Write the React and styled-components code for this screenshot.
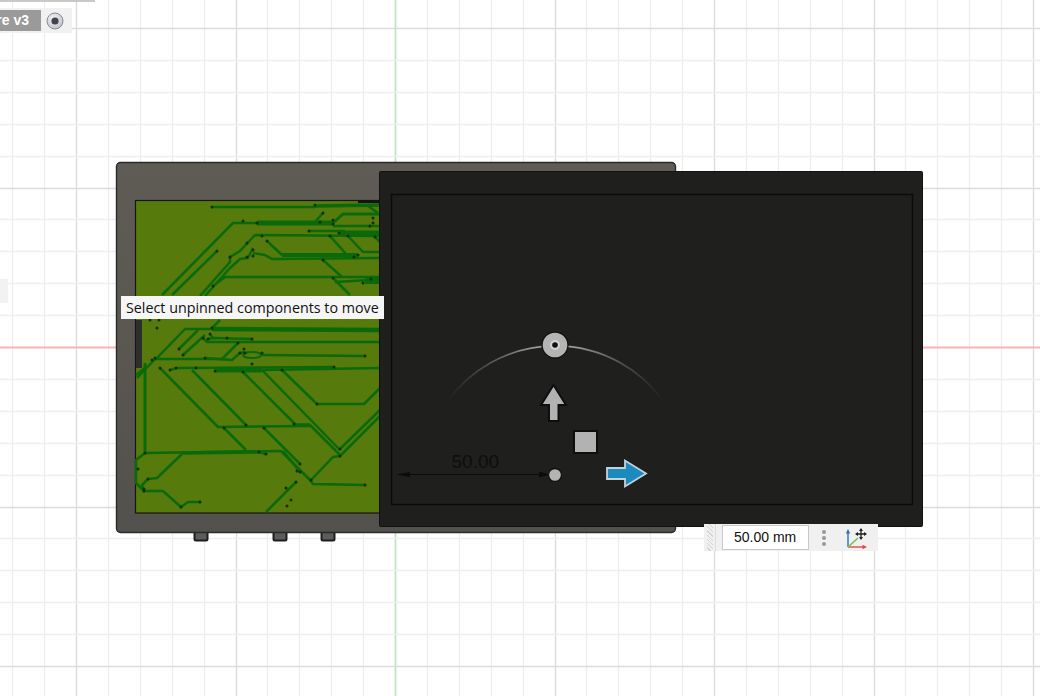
import React from 'react'
import styled, { createGlobalStyle } from 'styled-components'

const GlobalStyle = createGlobalStyle`
  html, body { margin: 0; padding: 0; background: #fff; }
  body { font-family: "Liberation Sans", Arial, sans-serif; }
`

// screen coordinates of the copper traces, [width, x,y, x,y, ...]
const traces = [
  [2.5, 212,207, 315,207],
  [3.5, 315,206, 380,205],
  [2.5, 368,206, 378,213],
  [2.5, 323,213, 315,222],
  [2.5, 162,295, 233,223, 258,223],
  [5, 257,223, 333,223],
  [3, 333,223, 343,214, 380,214],
  [2.5, 333,226, 380,226],
  [2.5, 309,231, 345,231],
  [5, 339,233, 380,233],
  [2.5, 172,295, 217,251],
  [2.5, 200,296, 230,262, 230,257, 240,251, 255,235, 380,236],
  [2.5, 205,296, 230,268, 240,259, 248,258, 253,248],
  [2.5, 253,253, 265,255, 272,259, 380,258],
  [2.5, 267,241, 282,255],
  [4, 282,255, 358,255],
  [2.5, 330,236, 347,255],
  [2.5, 348,236, 363,252, 380,252],
  [2.5, 375,237, 380,242],
  [2.5, 323,260, 342,277],
  [2.5, 213,286, 225,277, 380,277],
  [2.5, 333,278, 350,295],
  [2.5, 335,282, 370,280],
  [6, 365,281, 380,281],
  [2.5, 155,360, 185,329, 212,329],
  [4.5, 212,329, 380,330],
  [2.5, 212,328, 220,320],
  [2.5, 179,349, 198,330],
  [2.5, 183,355, 205,335],
  [2.5, 203,338, 207,342, 380,342],
  [2.5, 208,339, 213,338, 252,339],
  [2.5, 210,334, 213,338],
  [2.5, 155,359, 222,359, 238,343],
  [2.5, 205,358, 232,360, 240,353, 245,352],
  [2.5, 262,355, 365,356],
  [2.5, 170,370, 177,368, 334,367],
  [2.5, 262,370, 380,368],
  [5, 215,370, 262,370],
  [2.5, 137,378, 155,359],
  [2.5, 160,368, 218,427, 310,426],
  [2.5, 192,370, 246,425],
  [2.5, 243,372, 295,424],
  [2.5, 263,371, 340,450],
  [3.5, 295,425, 310,425],
  [2.5, 310,425, 340,455],
  [2.5, 282,370, 317,404, 364,404, 380,388],
  [2.5, 340,449, 380,410],
  [2.5, 340,456, 380,416],
  [2.5, 224,428, 246,450],
  [2.5, 264,428, 300,464],
  [3, 145,363, 145,453],
  [2.5, 136,375, 145,368],
  [2.5, 145,453, 281,451, 310,480, 313,484, 365,485],
  [3.5, 182,453, 258,452],
  [2.5, 258,452, 266,454],
  [2.5, 182,454, 157,478, 148,479, 142,485, 144,491, 163,491, 181,507, 188,502, 200,502],
  [2.5, 145,453, 136,460, 136,483, 144,491],
  [2.5, 311,480, 333,457, 340,456],
  [2.5, 296,482, 266,512],
  [2.5, 283,451, 300,472],
]

const vias = [
  [212,207],[315,205],[323,213],[243,221],[257,223],[320,222],[333,220],[333,224],[373,218],[373,223],[370,226],
  [309,231],[339,233],[330,236],[348,236],[375,237],[262,236],[267,241],[247,243],[253,250],[217,251],
  [230,257],[247,257],[253,256],[323,260],[358,255],[354,257],[333,278],[371,279],[363,283],[213,286],
  [150,320],[159,320],[157,328],[212,328],[210,334],[203,338],[208,339],[227,338],[252,339],[238,343],
  [179,349],[183,355],[152,360],[155,358],[205,358],[240,353],[245,353],[244,349],[262,353],[365,356],[252,364],
  [160,368],[170,370],[176,368],[196,368],[215,371],[243,372],[282,370],[334,367],[317,404],[246,425],[294,424],
  [224,428],[264,428],[145,453],[259,452],[266,454],[300,464],[297,471],[300,472],[296,482],[286,488],[291,500],
  [287,506],[311,480],[365,485],[340,449],[340,456],[138,469],[148,479],[144,489],[144,491],[181,507],[200,502],
]

const minor = 31.9
const axisX = 395
const axisY = 347

const gridStops = (origin, size) => {
  const out = []
  for (let k = -20; k <= 30; k++) {
    const at = origin + k * minor
    if (at < 0 || at > size) continue
    out.push({ at: Math.round(at) + 0.5, major: k % 5 === 0, axis: k === 0 })
  }
  return out
}

const Page = styled.div`
  position: relative;
  width: 1040px;
  height: 696px;
  overflow: hidden;
  background: #fff;
`

const Scene = styled.svg`
  display: block;
`

const BrowserNode = styled.div`
  position: absolute;
  left: 0;
  top: 8px;
  width: 72px;
  height: 25px;
  display: flex;
  align-items: center;
  background: #f1f1f1;
`

const NodeName = styled.div`
  width: 41px;
  height: 21px;
  display: flex;
  justify-content: flex-end;
  background: #9a9a9a;
  color: #fff;
  font-size: 14px;
  font-weight: 700;
  line-height: 21px;
  padding-right: 12px;
  box-sizing: border-box;
  overflow: hidden;
  white-space: nowrap;
  flex: none;
`

const NodeButton = styled.div`
  margin-left: 5px;
  width: 18px;
  height: 18px;
`

const TopRule = styled.div`
  position: absolute;
  left: 0;
  top: 0;
  width: 95px;
  height: 2px;
  background: #c9c9c9;
`

const SideStub = styled.div`
  position: absolute;
  left: 0;
  top: 279px;
  width: 8px;
  height: 24px;
  background: #f2f2f2;
`

const Tooltip = styled.div`
  position: absolute;
  left: 121px;
  top: 296px;
  width: 263px;
  height: 23px;
  box-sizing: border-box;
  padding-left: 5px;
  background: #f6f6f6;
  color: #111;
  font-family: "Open Sans", "Noto Sans", sans-serif;
  font-size: 14.3px;
  line-height: 23px;
  white-space: nowrap;
`

const ValueBar = styled.div`
  position: absolute;
  left: 704px;
  top: 524px;
  width: 174px;
  height: 27px;
  display: flex;
  align-items: center;
  background: #f0f0f0;
`

const Gripper = styled.div`
  flex: none;
  width: 6px;
  height: 100%;
  margin-left: 3px;
  background: repeating-linear-gradient(45deg, #f0f0f0 0 2px, #d4d4d4 2px 3px);
`

const Divider = styled.div`
  flex: none;
  width: 1px;
  height: 100%;
  margin-left: 2px;
  background: #dcdcdc;
`

const ValueInput = styled.div`
  flex: none;
  width: 87px;
  height: 25px;
  margin-left: 6px;
  box-sizing: border-box;
  border: 1px solid #c9c9c9;
  background: #fff;
  color: #111;
  font-size: 14px;
  line-height: 23px;
  padding-left: 11px;
  white-space: nowrap;
`

const MoreDots = styled.div`
  display: flex;
  flex-direction: column;
  gap: 2px;
  margin-left: 13px;
  span {
    width: 4px;
    height: 4px;
    border-radius: 50%;
    background: #989898;
  }
`

const AxisIcon = styled.svg`
  margin-left: 19px;
  flex: none;
`

const pts = (list) => {
  let s = ''
  for (let i = 0; i < list.length; i += 2) s += list[i] + ',' + list[i + 1] + ' '
  return s
}

const Grid = () => (
  <g>
    {gridStops(axisX, 1040).map((l) => (
      <line key={'v' + l.at} x1={l.at} y1={0} x2={l.at} y2={696} strokeWidth={l.axis ? 1.8 : 1.4}
        stroke={l.axis ? '#bfe4bf' : l.major ? '#dcdcdc' : '#eeeeee'} />
    ))}
    {gridStops(axisY, 696).map((l) => (
      <line key={'h' + l.at} x1={0} y1={l.at} x2={1040} y2={l.at} strokeWidth={l.axis ? 1.8 : 1.4}
        stroke={l.axis ? '#f8b4b4' : l.major ? '#dcdcdc' : '#eeeeee'} />
    ))}
  </g>
)

const Enclosure = () => (
  <g>
    {[194, 273, 321].map((x) => (
      <rect key={x} x={x + 0.5} y={530} width={13} height={10.5} rx={1.5} fill="#5c5c5a" stroke="#1e1e1e" strokeWidth={2} />
    ))}
    <rect x={116.5} y={162.5} width={559} height={370} rx={4} fill="url(#shell)" stroke="#2a2a2a" strokeWidth={1.4} />
    <rect x={135.5} y={200.5} width={246} height={312.5} fill="#567a0c" stroke="#161616" strokeWidth={1.2} />
    <rect x={358} y={200} width={24} height={3} fill="#141414" />
    {traces.map((t, i) => (
      <polyline key={i} points={pts(t.slice(1))} fill="none" stroke="#0a6a0a" strokeWidth={t[0]} strokeLinejoin="round" />
    ))}
    <ellipse cx={252} cy={355} rx={9} ry={3} fill="#567a0c" stroke="#0a6a0a" strokeWidth={2} />
    <rect x={136} y={320} width={6} height={48} fill="#2e2e2c" />
    {vias.map(([x, y], i) => (
      <circle key={i} cx={x} cy={y} r={1.5} fill="#14300a" />
    ))}
  </g>
)

const Gizmo = () => (
  <g>
    <rect x={379.5} y={171.5} width={543} height={355} rx={1} fill="#1f1f1e" stroke="#111" />
    <rect x={391.5} y={194.5} width={521} height={310} fill="#1f1f1e" stroke="#0b0b0b" strokeWidth={1.4} />
    <path d="M447 402 A133 133 0 0 1 664 402" fill="none" stroke="url(#arc)" strokeWidth={1.6} />
    <circle cx={555} cy={345} r={13} fill="#b4b4b4" stroke="#141414" strokeWidth={1.4} />
    <circle cx={555} cy={345} r={5} fill="#d4d4d4" />
    <circle cx={555} cy={345} r={2.8} fill="#111" />
    <polygon points="553.5,385 566,405 558.5,405 558.5,421 549,421 549,405 541,405" fill="#b2b2b2" stroke="#0e0e0e" strokeWidth={2} />
    <rect x={574} y={431} width={23} height={22} fill="#b2b2b2" stroke="#0e0e0e" strokeWidth={2} />
    <line x1={400} y1={474.5} x2={546} y2={474.5} stroke="#0c0c0c" strokeWidth={1.2} />
    <polygon points="396,474.5 410,472 410,477" fill="#0c0c0c" />
    <polygon points="550,474.5 539,471.5 539,477.5" fill="#0c0c0c" />
    <text x={451.5} y={468} fontFamily="Liberation Sans, Arial, sans-serif" fontSize={19} fill="#0e0e0e">50.00</text>
    <circle cx={555} cy={475} r={6.5} fill="#b4b4b4" stroke="#111" strokeWidth={1.3} />
    <polygon points="607,468 625,468 625,460.5 646,473.5 625,486.5 625,479 607,479" fill="#1b8abf" stroke="#c4d2da" strokeWidth={1.8} />
  </g>
)

const RadioGlyph = () => (
  <svg width="18" height="18" viewBox="0 0 18 18">
    <defs>
      <radialGradient id="radio" cx="0.4" cy="0.35" r="0.75">
        <stop offset="0" stopColor="#f4f6fb" />
        <stop offset="1" stopColor="#b7bdcc" />
      </radialGradient>
    </defs>
    <circle cx="9" cy="9" r="8" fill="url(#radio)" stroke="#8c8c8c" />
    <circle cx="9" cy="9" r="3.6" fill="#444" />
  </svg>
)

const AxesGlyph = () => (
  <AxisIcon width="26" height="24" viewBox="0 0 26 24">
    <path d="M3 21 L3 6" stroke="#2a6fc0" strokeWidth="1.4" fill="none" />
    <polygon points="3,3 0.8,7.5 5.2,7.5" fill="#2a6fc0" />
    <path d="M3 21 L19 21" stroke="#e0494a" strokeWidth="1.4" fill="none" />
    <polygon points="22,21 17.5,18.8 17.5,23.2" fill="#e0494a" />
    <path d="M3 21 L13 12" stroke="#74c24a" strokeWidth="1.6" fill="none" />
    <path d="M16 3 L16 13 M11 8 L21 8" stroke="#222" strokeWidth="1.3" fill="none" />
    <polygon points="16,2 14,5 18,5" fill="#222" />
    <polygon points="16,14 14,11 18,11" fill="#222" />
    <polygon points="10,8 13,6 13,10" fill="#222" />
    <polygon points="22,8 19,6 19,10" fill="#222" />
  </AxisIcon>
)

const App = () => (
  <Page>
    <GlobalStyle />
    <Scene width="1040" height="696" viewBox="0 0 1040 696">
      <defs>
        <linearGradient id="shell" x1="0" y1="0" x2="0" y2="1">
          <stop offset="0" stopColor="#5f5c55" />
          <stop offset="0.5" stopColor="#5a5751" />
          <stop offset="1" stopColor="#53514d" />
        </linearGradient>
        <linearGradient id="arc" x1="447" y1="0" x2="664" y2="0" gradientUnits="userSpaceOnUse">
          <stop offset="0" stopColor="#777" stopOpacity="0" />
          <stop offset="0.4" stopColor="#9a9a9a" />
          <stop offset="0.6" stopColor="#9a9a9a" />
          <stop offset="1" stopColor="#777" stopOpacity="0" />
        </linearGradient>
      </defs>
      <Grid />
      <Enclosure />
      <Gizmo />
    </Scene>
    <TopRule />
    <BrowserNode>
      <NodeName>re v3</NodeName>
      <NodeButton><RadioGlyph /></NodeButton>
    </BrowserNode>
    <SideStub />
    <Tooltip>Select unpinned components to move</Tooltip>
    <ValueBar>
      <Gripper />
      <Divider />
      <ValueInput>50.00 mm</ValueInput>
      <MoreDots><span /><span /><span /></MoreDots>
      <AxesGlyph />
    </ValueBar>
  </Page>
)

export default App
